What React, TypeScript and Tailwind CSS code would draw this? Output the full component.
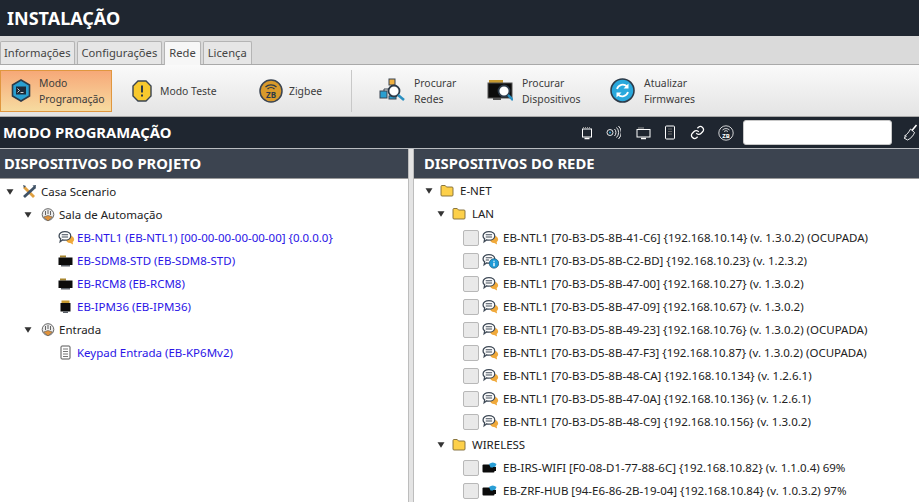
import React from "react";

const Arrow = () => (
  <svg width="8" height="6" viewBox="0 0 8 6" className="shrink-0">
    <path d="M0.500 0.200H7.500L4 5.800Z" fill="#333" />
  </svg>
);

const Folder = () => (
  <svg width="14" height="13" viewBox="0 0 14 13" className="shrink-0">
    <path d="M1 2.500a1 1 0 0 1 1-1h3.200l1.300 1.500H12a1 1 0 0 1 1 1v7a1 1 0 0 1-1 1H2a1 1 0 0 1-1-1Z" fill="#fdd04a" stroke="#7d6a35" strokeWidth="0.900" />
  </svg>
);

const Chat = ({ info = false }: { info?: boolean }) => (
  <svg width="17" height="16" viewBox="0 0 16 15" className="shrink-0">
    {info ? (
      <>
        <path d="M1 5.500C1 3 3.500 1.500 6.500 1.500S12 3 12 5.500 9.500 9.500 6.500 9.500c-.7 0-1.400-.1-2-.3L2 11l.5-2.800C1.500 7.500 1 6.500 1 5.500Z" fill="#fff" stroke="#3f4a57" strokeWidth="1.200" />
        <path d="M3.500 4.500h6M3.500 6.500h3" stroke="#3f4a57" strokeWidth="1" />
        <circle cx="11.300" cy="9.800" r="4.500" fill="#1f9ad6" stroke="#1d4f6b" strokeWidth="0.600" />
        <path d="M11.300 7.300v1M11.300 9.200v3.300" stroke="#fff" strokeWidth="1.300" />
      </>
    ) : (
      <>
        <path d="M7 8.500c2-.2 3.800-1 4.800-3 2 .2 3.400 1.500 3.400 3.200 0 1.200-.6 2-1.400 2.600l.4 2.400-2.700-1.400c-2 .2-3.600-1.400-4.500-3.800Z" fill="#f0a93a" />
        <path d="M1 5.500C1 3 3.500 1.500 6.500 1.500S12 3 12 5.500 9.500 9.500 6.500 9.500c-.7 0-1.400-.1-2-.3L2 11l.5-2.800C1.500 7.500 1 6.500 1 5.500Z" fill="#fff" stroke="#3f4a57" strokeWidth="1.200" />
        <path d="M3.500 4.500h6M3.500 6.500h6" stroke="#3f4a57" strokeWidth="1" />
      </>
    )}
  </svg>
);

const BlackBox = () => (
  <svg width="15" height="12" viewBox="0 0 15 12" className="shrink-0">
    <rect x="2" y="0.500" width="6" height="2" fill="#a8862f" />
    <rect x="0.500" y="2.500" width="14" height="7.500" fill="#0c0c0c" />
    <rect x="3" y="10" width="9" height="1.500" fill="#5a6068" />
  </svg>
);

const SmallBox = () => (
  <svg width="15" height="13" viewBox="0 0 15 13" className="shrink-0">
    <rect x="3.500" y="0.500" width="8" height="2.500" fill="#c79a30" />
    <rect x="2.500" y="3" width="10" height="8.500" fill="#0c0c0c" />
    <rect x="5" y="11.500" width="5" height="1.500" fill="#5a6068" />
  </svg>
);

const Keypad = () => (
  <svg width="15" height="15" viewBox="0 0 15 15" className="shrink-0">
    <rect x="3" y="1" width="9" height="13" rx="1" fill="#fff" stroke="#555" />
    <path d="M5 4h5M5 6.500h5M5 9h5M5 11.500h5" stroke="#777" />
  </svg>
);

const WifiBox = () => (
  <svg width="15" height="13" viewBox="0 0 15 13" className="shrink-0">
    <rect x="0.500" y="3.500" width="12" height="8" rx="1" fill="#0c0c0c" />
    <path d="M7 3a6 6 0 0 1 7.500 0L13 6.500H8.500Z" fill="#2a9fd6" />
    <rect x="11" y="6" width="3" height="4" fill="#0c0c0c" />
  </svg>
);

const Room = () => (
  <svg width="14" height="14" viewBox="0 0 14 14" className="shrink-0">
    <circle cx="7" cy="6.500" r="5.800" fill="#ececec" stroke="#555" strokeWidth="0.900" />
    <path d="M2.500 9L7 13l4.500-4L7 7.500Z" fill="#e0923a" stroke="#555" strokeWidth="0.600" />
    <path d="M4.500 3v4M7 2v4M9.500 3v4" stroke="#555" strokeWidth="0.900" />
  </svg>
);

const Tools = () => (
  <svg width="15" height="15" viewBox="0 0 15 15" className="shrink-0">
    <path d="M2 3l10 10" stroke="#e0a040" strokeWidth="2.800" />
    <path d="M13 3L2 13" stroke="#3f5266" strokeWidth="2.800" />
    <path d="M1 1l3 1-2 2ZM10.500 1.500l3.500-.5-.5 3.500Z" fill="#3f5266" />
  </svg>
);

const Row = ({ children, pl }: { children: React.ReactNode; pl: string }) => (
  <div className={`flex h-[23px] items-center whitespace-nowrap ${pl}`}>{children}</div>
);

const Btn = ({
  icon,
  lines,
  className = "",
  active = false,
}: {
  icon: React.ReactNode;
  lines: string[];
  className?: string;
  active?: boolean;
}) => (
  <div
    className={`flex h-[42px] items-center ${className} ${
      active ? "border border-[#e0973f] bg-gradient-to-b from-[#f6a878] to-[#f6dba0]" : ""
    }`}
  >
    {icon}
    <div className="text-[10.400px] leading-[16px] text-[#3c3c3c]">
      {lines.map((l) => (
        <div key={l}>{l}</div>
      ))}
    </div>
  </div>
);

const lan = [
  ["EB-NTL1 [70-B3-D5-8B-41-C6] {192.168.10.14} (v. 1.3.0.2) (OCUPADA)", false],
  ["EB-NTL1 [70-B3-D5-8B-C2-BD] {192.168.10.23} (v. 1.2.3.2)", true],
  ["EB-NTL1 [70-B3-D5-8B-47-00] {192.168.10.27} (v. 1.3.0.2)", false],
  ["EB-NTL1 [70-B3-D5-8B-47-09] {192.168.10.67} (v. 1.3.0.2)", false],
  ["EB-NTL1 [70-B3-D5-8B-49-23] {192.168.10.76} (v. 1.3.0.2) (OCUPADA)", false],
  ["EB-NTL1 [70-B3-D5-8B-47-F3] {192.168.10.87} (v. 1.3.0.2) (OCUPADA)", false],
  ["EB-NTL1 [70-B3-D5-8B-48-CA] {192.168.10.134} (v. 1.2.6.1)", false],
  ["EB-NTL1 [70-B3-D5-8B-47-0A] {192.168.10.136} (v. 1.2.6.1)", false],
  ["EB-NTL1 [70-B3-D5-8B-48-C9] {192.168.10.156} (v. 1.3.0.2)", false],
] as const;

const wireless = [
  "EB-IRS-WIFI [F0-08-D1-77-88-6C] {192.168.10.82} (v. 1.1.0.4) 69%",
  "EB-ZRF-HUB [94-E6-86-2B-19-04] {192.168.10.84} (v. 1.0.3.2) 97%",
];

const Check = () => (
  <div className="mr-[3px] h-[16px] w-[16px] shrink-0 rounded-[2px] border border-[#b8b8b8] bg-[#e9e9e9]" />
);

const tabs = ["Informações", "Configurações", "Rede", "Licença"];

export default function App() {
  return (
    <div className="flex h-[502px] w-[919px] flex-col overflow-hidden bg-white font-['Noto_Sans',sans-serif] text-[11.500px] text-[#222]">
      <div className="flex h-[36px] items-center bg-[#1f2630] pl-[7px] text-[18px] font-bold text-white">INSTALAÇÃO</div>

      <div className="flex h-[29px] items-end gap-[2px] border-b border-[#a9a9a9] bg-[#dadada]">
        {tabs.map((t) => (
          <div
            key={t}
            className={`flex items-center rounded-t-[2px] border border-b-0 border-[#b4b4b4] text-[11.200px] text-[#444] ${
              t === "Informações" ? "px-[3px]" : "px-[4px]"
            } ${t === "Rede" ? "relative top-[1px] h-[24px] bg-[#f7f7f7]" : "h-[23px] bg-[#e6e6e6]"}`}
          >
            {t}
          </div>
        ))}
      </div>

      <div className="flex h-[52px] items-center border-b border-[#a9a9a9] bg-gradient-to-b from-[#fafafa] to-[#e4e4e4]">
        <Btn
          active
          className="w-[112px] gap-[8px] pl-[10px]"
          lines={["Modo", "Programação"]}
          icon={
            <svg width="20" height="23" viewBox="0 0 20 23">
              <path d="M10 1l8.500 5v11L10 22l-8.500-5V6Z" fill="#2a9fd0" stroke="#2d3a48" strokeWidth="1.600" />
              <rect x="5" y="7.500" width="10" height="8" fill="#1d2a38" />
              <path d="M6.500 9.500l2 2-2 2M9.500 13.500h3" stroke="#fff" fill="none" strokeWidth="0.800" />
            </svg>
          }
        />
        <Btn
          className="ml-[20px] w-[127px] gap-[8px]"
          lines={["Modo Teste"]}
          icon={
            <svg width="20" height="22" viewBox="0 0 20 22">
              <path d="M6 1h8l5 5v10l-5 5H6l-5-5V6Z" fill="#f8c92e" stroke="#3a4452" strokeWidth="1.400" />
              <path d="M10 5.500v7M10 14.500v2" stroke="#2d3a48" strokeWidth="2" />
            </svg>
          }
        />
        <Btn
          className="w-[92px] gap-[6px]"
          lines={["Zigbee"]}
          icon={
            <svg width="24" height="24" viewBox="0 0 24 24">
              <circle cx="12" cy="12" r="11" fill="#d99a2b" stroke="#3a4452" strokeWidth="1.500" />
              <path d="M6.500 8a8 8 0 0 1 11 0M8.500 10a5 5 0 0 1 7 0" stroke="#2d3a48" fill="none" strokeWidth="1.300" />
              <rect x="5" y="12" width="14" height="7" rx="1" fill="#d99a2b" />
              <text x="12" y="19" textAnchor="middle" fontSize="8" fontWeight="700" fill="#2d3a48" fontFamily="Noto Sans">ZB</text>
            </svg>
          }
        />
        <div className="h-[42px] w-[1px] bg-[#c8c8c8]" />
        <Btn
          className="ml-[27px] w-[108px] gap-[9px]"
          lines={["Procurar", "Redes"]}
          icon={
            <svg width="26" height="26" viewBox="0 0 26 26">
              <rect x="10" y="1" width="6" height="6" fill="#f0b040" stroke="#3a4452" />
              <path d="M13 7v3M5 13v-2h5" stroke="#3a4452" fill="none" />
              <rect x="1" y="13" width="7" height="7" fill="#2a9fd0" stroke="#3a4452" />
              <rect x="10" y="18" width="7" height="3" fill="#2a9fd0" stroke="#3a4452" />
              <circle cx="15" cy="13" r="5.500" fill="#fff" stroke="#2d3a48" strokeWidth="1.800" />
              <path d="M19 17l6 5" stroke="#2a8fc0" strokeWidth="2.500" />
            </svg>
          }
        />
        <Btn
          className="w-[123px] gap-[9px]"
          lines={["Procurar", "Dispositivos"]}
          icon={
            <svg width="26" height="24" viewBox="0 0 26 24">
              <rect x="2" y="1" width="14" height="3" fill="#c79a30" />
              <rect x="1" y="4" width="24" height="15" fill="#0c0c0c" stroke="#555" />
              <rect x="6" y="19" width="8" height="2" fill="#555" />
              <circle cx="17" cy="12" r="5.500" fill="#fff" stroke="#2d3a48" strokeWidth="1.800" />
              <path d="M21 16l5 5" stroke="#2a8fc0" strokeWidth="2.500" />
            </svg>
          }
        />
        <Btn
          className="gap-[9px]"
          lines={["Atualizar", "Firmwares"]}
          icon={
            <svg width="25" height="25" viewBox="0 0 25 25">
              <circle cx="12.500" cy="12.500" r="11.500" fill="#29a8dc" stroke="#2d3a48" strokeWidth="1.600" />
              <path d="M7 11a6 6 0 0 1 10-2.500M18 14a6 6 0 0 1-10 2.500" stroke="#fff" fill="none" strokeWidth="1.800" />
              <path d="M18.500 5.500v5h-5ZM6.500 19.500v-5h5Z" fill="#fff" />
            </svg>
          }
        />
      </div>

      <div className="flex h-[32px] items-center border-b border-[#b9bcc0] bg-[#1f2630] pl-[3px] pr-[1px] text-white">
        <div className="text-[14.800px] font-bold">MODO PROGRAMAÇÃO</div>
        <div className="ml-auto flex items-center">
          <svg width="14" height="14" viewBox="0 0 14 14" className="mr-[12px]" fill="none" stroke="#fff">
            <path d="M3 1.500h8" strokeDasharray="1 1" stroke="#999" />
            <rect x="2.500" y="3" width="9" height="8" />
            <path d="M4.500 12.500h5" strokeWidth="1.500" />
          </svg>
          <svg width="15" height="15" viewBox="0 0 15 15" className="mr-[15px]" fill="none" stroke="#fff" strokeWidth="0.900">
            <circle cx="4" cy="7.500" r="3" />
            <circle cx="4" cy="7.500" r="1" fill="#2a9fd0" stroke="none" />
            <path d="M8.500 4a5 5 0 0 1 0 7M10.500 2.500a7 7 0 0 1 0 10M12.500 1a9 9 0 0 1 0 13" />
          </svg>
          <svg width="15" height="14" viewBox="0 0 15 14" className="mr-[13px]" fill="none" stroke="#fff">
            <path d="M2 2h6" stroke="#999" />
            <rect x="1" y="3.500" width="13" height="7.500" />
            <path d="M5 12.500h5" strokeWidth="1.500" />
          </svg>
          <svg width="12" height="15" viewBox="0 0 12 15" className="mr-[14px]" fill="none" stroke="#fff">
            <rect x="1.500" y="1" width="9" height="13" rx="1" />
            <path d="M4 4h4M4 6.500h4M4 9h4" stroke="#666" />
          </svg>
          <svg width="15" height="15" viewBox="0 0 24 24" className="mr-[13px]" fill="none" stroke="#fff" strokeWidth="2">
            <path d="M10 13a5 5 0 0 0 7.500.5l3-3a5 5 0 0 0-7-7l-1.700 1.700" />
            <path d="M14 11a5 5 0 0 0-7.500-.5l-3 3a5 5 0 0 0 7 7l1.700-1.700" />
          </svg>
          <svg width="16" height="16" viewBox="0 0 16 16" className="mr-[9px]" fill="none" stroke="#fff" strokeWidth="0.800">
            <circle cx="8" cy="8" r="7.200" />
            <path d="M4.500 5a5 5 0 0 1 7 0M6 6.500a3 3 0 0 1 4 0" />
            <text x="8" y="13" textAnchor="middle" fontSize="6" fontWeight="700" fill="#fff" stroke="none" fontFamily="Noto Sans">ZB</text>
          </svg>
          <div className="h-[25px] w-[149px] rounded-[3px] border border-[#c8c8c8] bg-white" />
          <svg width="15" height="17" viewBox="0 0 15 17" className="ml-[11px]" fill="none" stroke="#fff" strokeWidth="0.900">
            <path d="M13.500 1L9 6.500" strokeWidth="1.500" />
            <path d="M7.500 5l4 3.500c-1 3-3.500 6-7 7.500L1 14c2-1 2.500-2 2.500-2S2.500 12 1.500 12C4 10.500 6 8 7.500 5Z" />
          </svg>
        </div>
      </div>

      <div className="flex min-h-0 flex-1">
        <div className="w-[408px] shrink-0">
          <div className="flex h-[30px] items-center border-b border-[#9a9a9a] bg-[#3c4450] pl-[4px] text-[14.800px] font-bold text-white">
            DISPOSITIVOS DO PROJETO
          </div>
          <div className="pt-[1px]">
            <Row pl="pl-[6px]">
              <Arrow />
              <span className="ml-[8px] mr-[4px]"><Tools /></span>
              Casa Scenario
            </Row>
            <Row pl="pl-[24px]">
              <Arrow />
              <span className="ml-[9px] mr-[4px]"><Room /></span>
              Sala de Automação
            </Row>
            <Row pl="pl-[58px]">
              <span className="mr-[2px]"><Chat /></span>
              <span className="text-[#2a14e6]">EB-NTL1 (EB-NTL1) [00-00-00-00-00-00] {"{0.0.0.0}"}</span>
            </Row>
            <Row pl="pl-[58px]">
              <span className="mr-[4px]"><BlackBox /></span>
              <span className="text-[#2a14e6]">EB-SDM8-STD (EB-SDM8-STD)</span>
            </Row>
            <Row pl="pl-[58px]">
              <span className="mr-[4px]"><BlackBox /></span>
              <span className="text-[#2a14e6]">EB-RCM8 (EB-RCM8)</span>
            </Row>
            <Row pl="pl-[58px]">
              <span className="mr-[4px]"><SmallBox /></span>
              <span className="text-[#2a14e6]">EB-IPM36 (EB-IPM36)</span>
            </Row>
            <Row pl="pl-[24px]">
              <Arrow />
              <span className="ml-[9px] mr-[4px]"><Room /></span>
              Entrada
            </Row>
            <Row pl="pl-[58px]">
              <span className="mr-[4px]"><Keypad /></span>
              <span className="text-[#2a14e6]">Keypad Entrada (EB-KP6Mv2)</span>
            </Row>
          </div>
        </div>

        <div className="w-[6px] shrink-0 border-x border-[#bdbdbd] bg-[#e4e4e4]" />

        <div className="min-w-0 flex-1">
          <div className="flex h-[30px] items-center border-b border-[#9a9a9a] bg-[#3c4450] pl-[10px] text-[14.800px] font-bold text-white">
            DISPOSITIVOS DO REDE
          </div>
          <div>
            <Row pl="pl-[11px]">
              <Arrow />
              <span className="ml-[7px] mr-[6px]"><Folder /></span>
              E-NET
            </Row>
            <Row pl="pl-[23px]">
              <Arrow />
              <span className="ml-[7px] mr-[6px]"><Folder /></span>
              LAN
            </Row>
            <div className="pt-[1px]">
              {lan.map(([t, info]) => (
                <Row pl="pl-[49px]" key={t}>
                  <Check />
                  <span className="mr-[4px]"><Chat info={info} /></span>
                  {t}
                </Row>
              ))}
            </div>
            <Row pl="pl-[23px]">
              <Arrow />
              <span className="ml-[7px] mr-[6px]"><Folder /></span>
              WIRELESS
            </Row>
            {wireless.map((t) => (
              <Row pl="pl-[49px]" key={t}>
                <Check />
                <span className="mr-[6px]"><WifiBox /></span>
                {t}
              </Row>
            ))}
          </div>
        </div>
      </div>
    </div>
  );
}
